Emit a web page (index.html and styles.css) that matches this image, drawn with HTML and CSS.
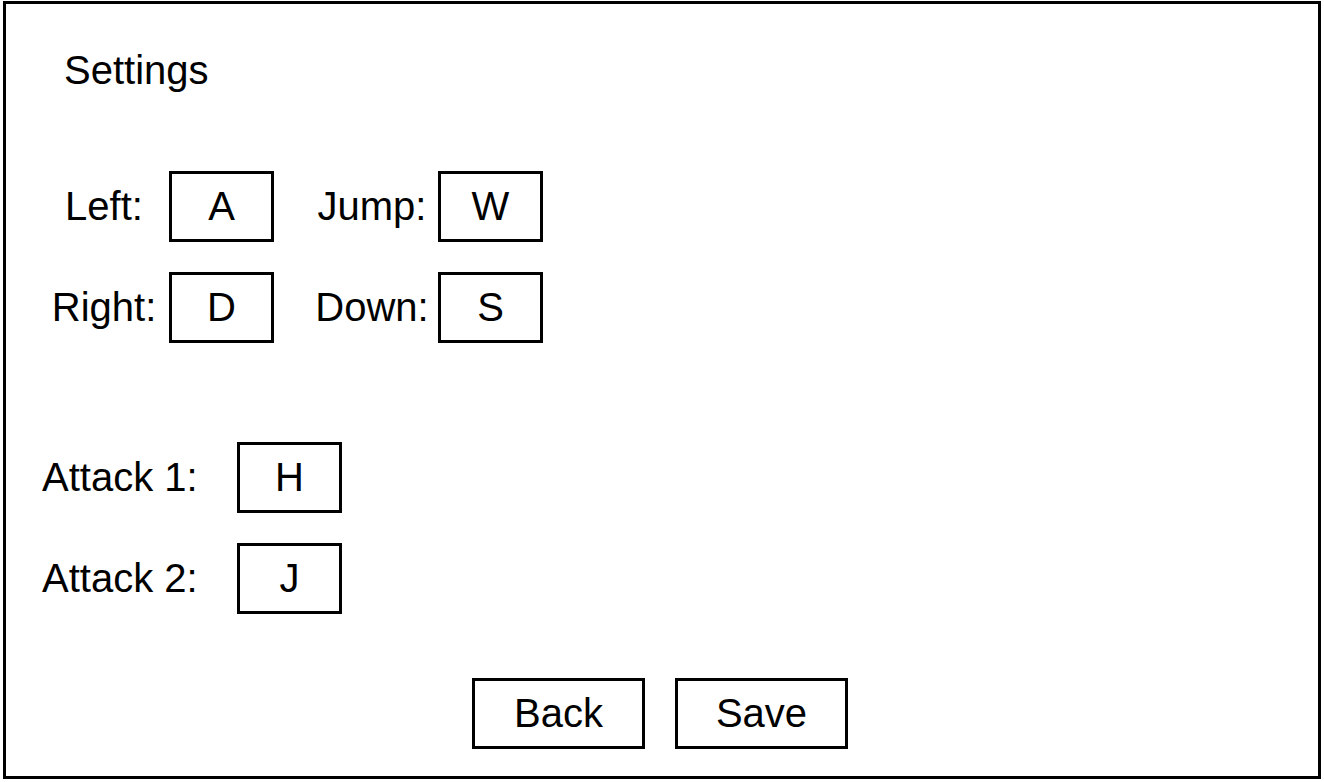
FILE: index.html
```html
<!DOCTYPE html>
<html>
<head>
<meta charset="utf-8">
<title>Settings</title>
<link rel="stylesheet" href="styles.css">
</head>
<body>
<div class="frame">
  <div class="title">Settings</div>
  <div class="moves">
    <div class="row">
      <div class="label label-a">Left:</div>
      <div class="key">A</div>
      <div class="label label-b">Jump:</div>
      <div class="key">W</div>
    </div>
    <div class="row">
      <div class="label label-a">Right:</div>
      <div class="key">D</div>
      <div class="label label-b">Down:</div>
      <div class="key">S</div>
    </div>
  </div>
  <div class="attacks">
    <div class="row">
      <div class="label label-atk">Attack 1:</div>
      <div class="key">H</div>
    </div>
    <div class="row">
      <div class="label label-atk">Attack 2:</div>
      <div class="key">J</div>
    </div>
  </div>
  <div class="actions">
    <div class="btn">Back</div>
    <div class="btn">Save</div>
  </div>
</div>
</body>
</html>
```

FILE: styles.css
```css
html, body {
  margin: 0;
  padding: 0;
  background: #fff;
}

body {
  font-family: "Liberation Sans", Arial, Helvetica, sans-serif;
  font-size: 40px;
  color: #000;
}

.frame {
  box-sizing: border-box;
  width: 1318px;
  height: 778px;
  margin: 1px 0 0 3px;
  border: 3px solid #000;
  display: flex;
  flex-direction: column;
}

.title {
  margin: 44px 0 0 58px;
  line-height: 45px;
}

.moves {
  margin-top: 78px;
  display: flex;
  flex-direction: column;
  gap: 30px;
}

.attacks {
  margin-top: 99px;
  display: flex;
  flex-direction: column;
  gap: 30px;
}

.row {
  display: flex;
  align-items: center;
}

.label {
  line-height: 45px;
}

.label-a {
  margin-left: 33px;
  width: 130px;
  text-align: center;
}

.label-b {
  margin-left: 32px;
  width: 132px;
  text-align: center;
}

.label-atk {
  margin-left: 36px;
  width: 195px;
}

.key {
  box-sizing: border-box;
  width: 105px;
  height: 71px;
  border: 3px solid #000;
  display: flex;
  align-items: center;
  justify-content: center;
}

.actions {
  margin-top: 64px;
  display: flex;
  justify-content: center;
  gap: 30px;
  padding-right: 4px;
}

.btn {
  box-sizing: border-box;
  width: 173px;
  height: 71px;
  border: 3px solid #000;
  display: flex;
  align-items: center;
  justify-content: center;
}
```
